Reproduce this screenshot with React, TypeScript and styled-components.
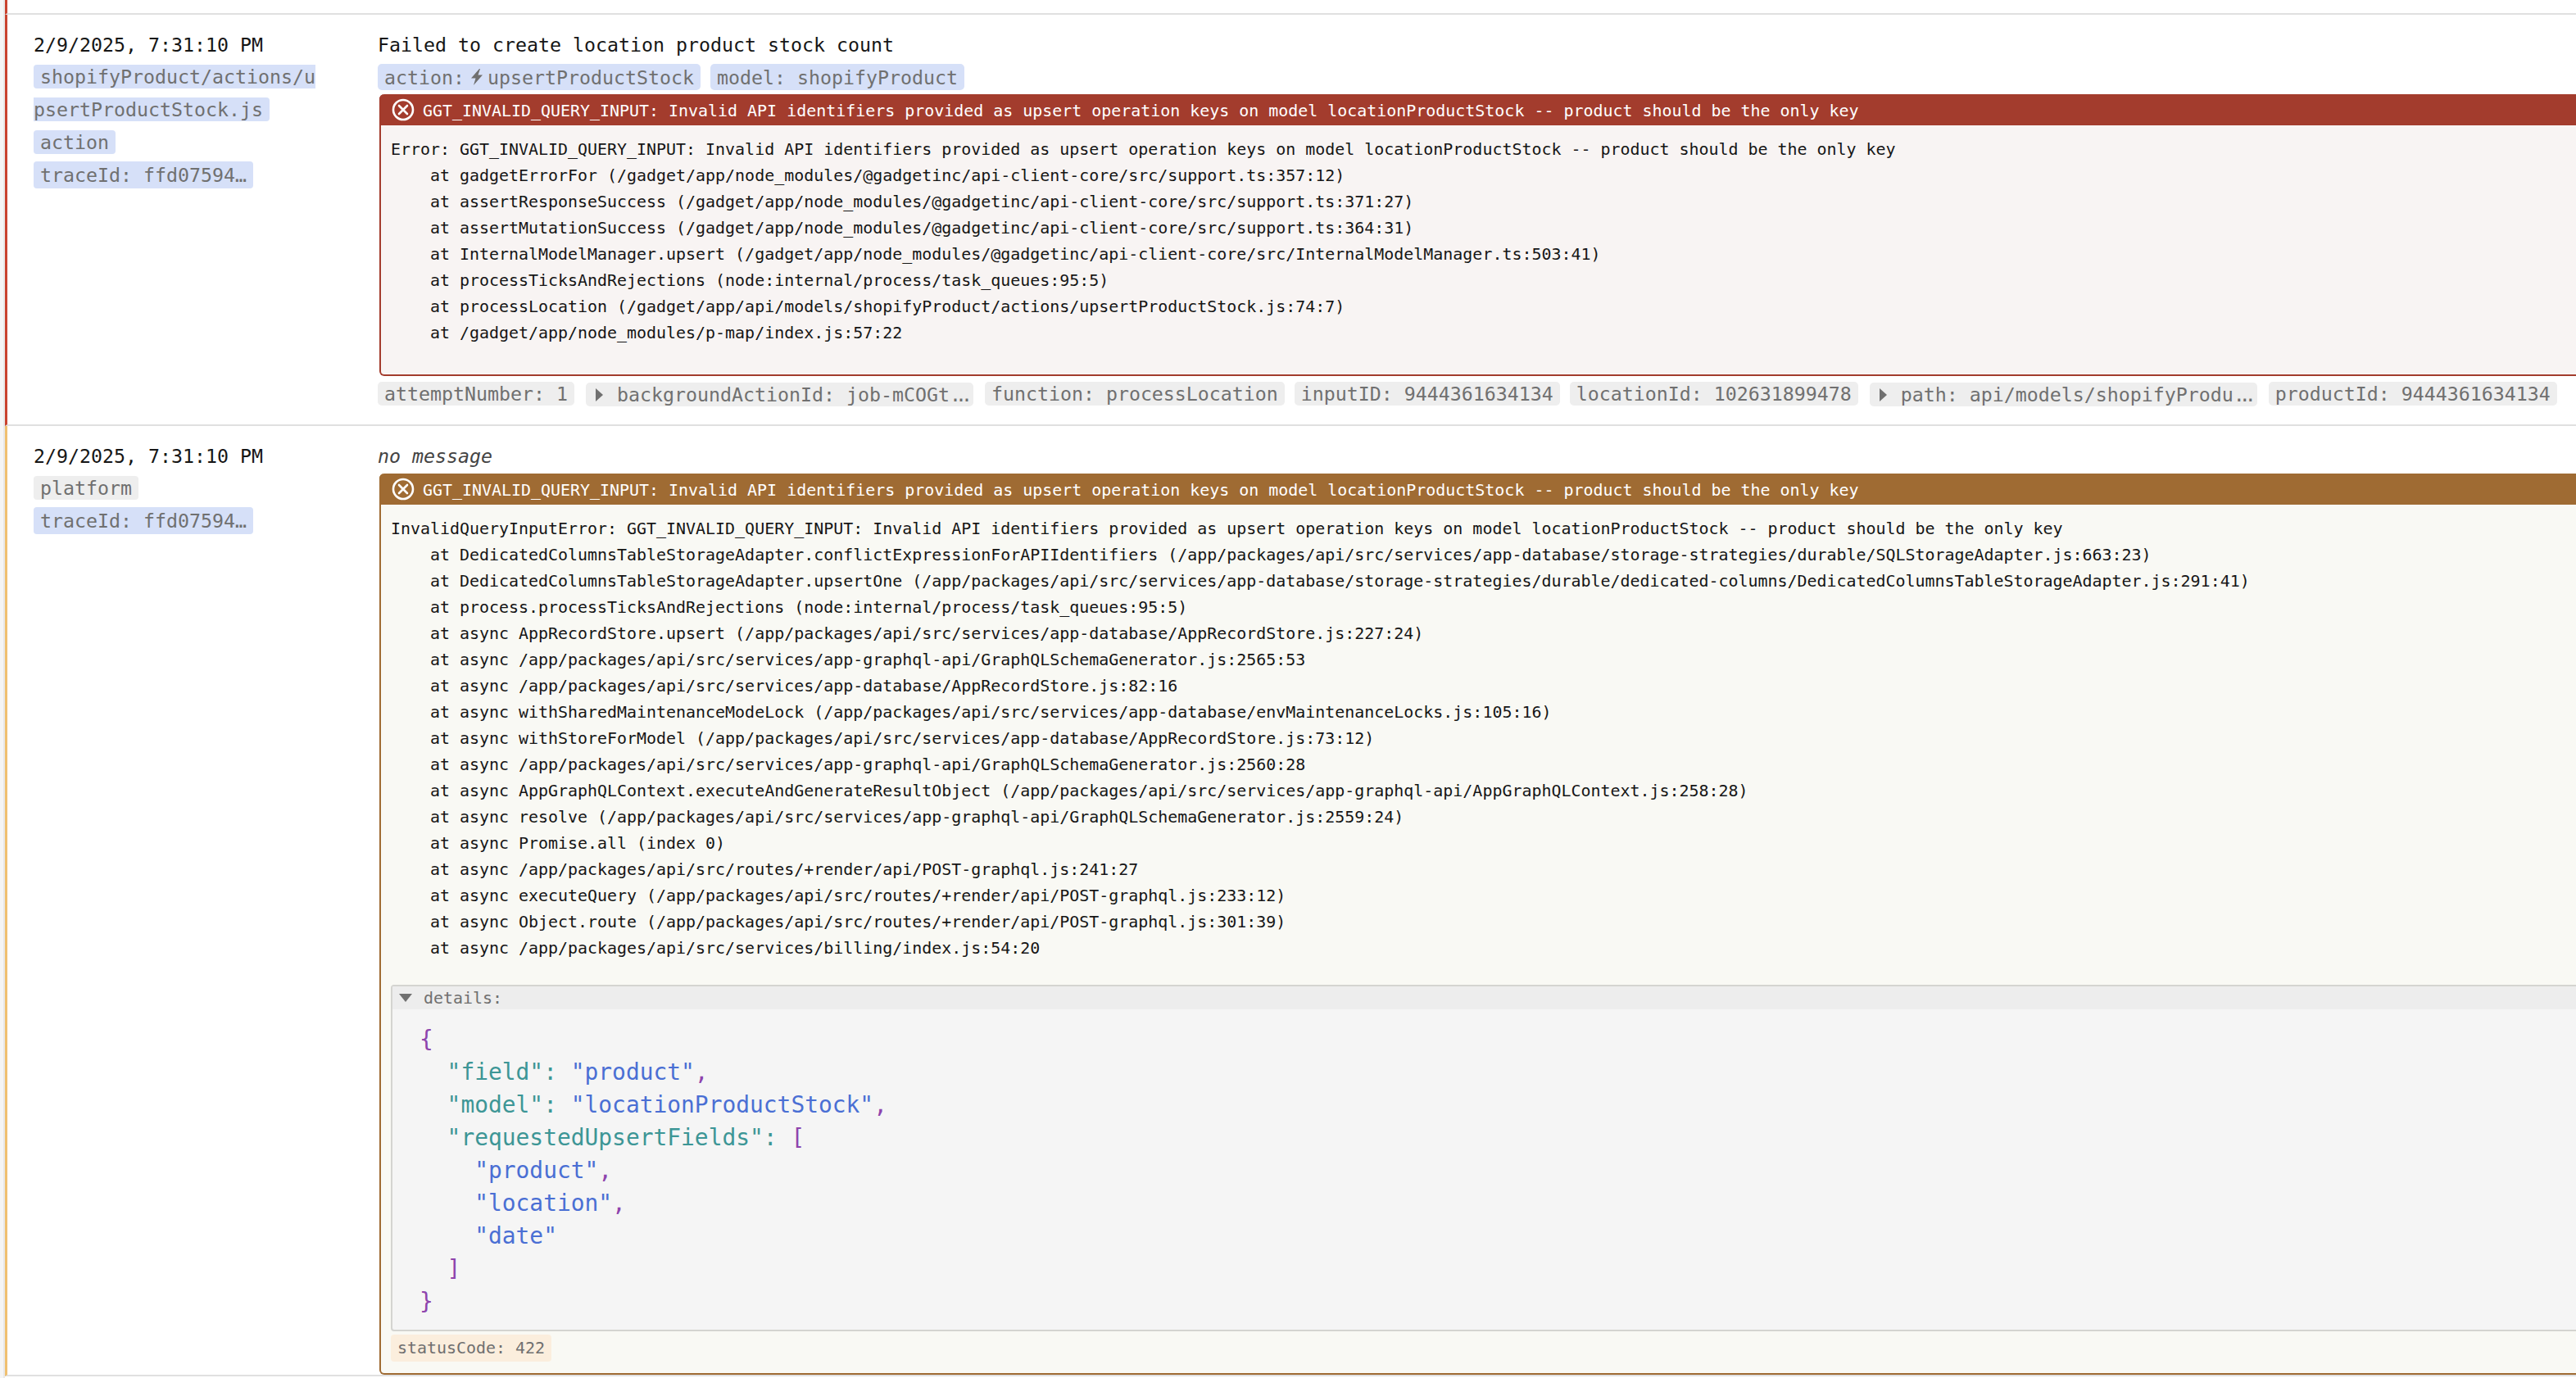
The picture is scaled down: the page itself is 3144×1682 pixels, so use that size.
import React from 'react';
import styled, { createGlobalStyle } from 'styled-components';

const colors = {
  error: '#c9432f',
  warn: '#f0c070',
  line: '#e0e0e0',
  chipText: '#707070',
};

const GlobalStyle = createGlobalStyle`
  html, body {
    margin: 0;
    padding: 0;
    height: 100%;
    overflow: hidden;
    background: #fff;
  }
`;

const Page = styled.div`
  display: flex;
  width: 3144px;
  height: 1682px;
  overflow: hidden;
  font-family: 'DejaVu Sans Mono', 'Liberation Mono', monospace;
  font-size: 23.25px;
  color: #161616;
`;

const Gutter = styled.div`
  flex: none;
  width: 4px;
  background: #f5f5f5;
  border-right: 2px solid #e9e9e9;
`;

const LogList = styled.div`
  flex: 1;
  min-width: 0;
`;

const PrevRow = styled.div<{ $level: string }>`
  height: 16px;
  border-left: 3px solid ${(p) => p.$level};
  border-bottom: 2px solid ${colors.line};
`;

const Row = styled.div<{ $level: string }>`
  display: flex;
  border-left: 3px solid ${(p) => p.$level};
  border-bottom: 2px solid ${colors.line};
`;

const Meta = styled.div`
  flex: none;
  width: 420px;
  margin-right: 32px;
  padding: 21px 0 0 32px;
  box-sizing: border-box;
`;

const Stamp = styled.div`
  line-height: 32px;
  white-space: nowrap;
`;

const MetaTags = styled.div`
  margin-top: 3px;
  width: 344px;
`;

const MetaLine = styled.div`
  line-height: 40px;
  word-break: break-all;
`;

const Tag = styled.span<{ $tone?: 'blue' | 'gray' }>`
  padding: 1px 8px;
  border-radius: 4px;
  color: ${colors.chipText};
  background: ${(p) => (p.$tone === 'blue' ? '#d6e0f8' : '#eeeeee')};
`;

const SplitTag = styled(Tag)`
  -webkit-box-decoration-break: slice;
  box-decoration-break: slice;
`;

const TraceTag = styled(Tag)`
  padding: 3px 8px;
`;

const Message = styled.div`
  flex: none;
  width: 2760px;
  padding-top: 21px;
`;

const Title = styled.div<{ $empty?: boolean }>`
  line-height: 32px;
  font-style: ${(p) => (p.$empty ? 'italic' : 'normal')};
  color: ${(p) => (p.$empty ? '#444' : 'inherit')};
`;

const ChipRow = styled.div`
  display: flex;
  gap: 12px;
  margin: 7px 0 1px;
`;

const Chip = styled.span<{ $tone?: 'blue' | 'gray' }>`
  display: inline-flex;
  align-items: center;
  height: 32px;
  padding: 0 8px;
  border-radius: 5px;
  white-space: pre;
  color: ${colors.chipText};
  background: ${(p) => (p.$tone === 'blue' ? '#d6e0f8' : '#eeeeee')};
`;

const BoltIcon = styled.svg`
  width: 14px;
  height: 20px;
  margin: 0 6px 0 8px;
  fill: #707070;
`;

const Panel = styled.div<{ $color: string; $bg: string }>`
  margin: 5px 0 0 2px;
  border: 2px solid ${(p) => p.$color};
  border-top: none;
  border-radius: 6px;
  background: ${(p) => p.$bg};
`;

const PanelHead = styled.div<{ $color: string }>`
  display: flex;
  align-items: center;
  height: 38px;
  margin: 0 -2px;
  padding: 1px 0 0 15px;
  box-sizing: border-box;
  gap: 10px;
  border-radius: 6px 6px 0 0;
  font-size: 19.95px;
  color: #fff;
  background: ${(p) => p.$color};
  white-space: pre;
`;

const CloseIcon = styled.svg`
  flex: none;
  width: 28px;
  height: 28px;
  margin-top: -1px;
`;

const PanelBody = styled.div`
  padding: 13px 12px 14px;
`;

const Trace = styled.pre`
  margin: 0;
  font: inherit;
  font-size: 19.95px;
  line-height: 32px;
  white-space: pre;
`;

const TraceEnd = styled.div`
  height: 21px;
`;

const Details = styled.div`
  margin-top: 8px;
  border: 2px solid #d4d4d0;
  border-radius: 4px;
  background: #f5f5f5;
`;

const DetailsHead = styled.div`
  display: flex;
  align-items: center;
  height: 28px;
  padding-left: 8px;
  font-size: 19.95px;
  color: ${colors.chipText};
  background: #ededed;
`;

const DownCaret = styled.span`
  width: 0;
  height: 0;
  margin-right: 14px;
  border-left: 8px solid transparent;
  border-right: 8px solid transparent;
  border-top: 10px solid #707070;
`;

const RightCaret = styled.span`
  width: 0;
  height: 0;
  margin: 0 17px 0 4px;
  border-top: 8px solid transparent;
  border-bottom: 8px solid transparent;
  border-left: 9px solid #707070;
`;

const Code = styled.pre`
  margin: 0;
  padding: 17px 33px 14px;
  font: inherit;
  font-size: 27.9px;
  line-height: 40px;
  white-space: pre;
`;

const JsonKey = styled.span`
  color: #3d9696;
`;

const JsonString = styled.span`
  color: #4a6fd4;
`;

const JsonPunct = styled.span`
  color: #8e44ad;
`;

const ExtraTag = styled.div`
  display: block;
  width: fit-content;
  margin-top: 4px;
  padding: 0 8px;
  font-size: 19.95px;
  line-height: 33px;
  border-radius: 4px;
  color: ${colors.chipText};
  background: #fbeedd;
`;

const FootRow = styled.div`
  display: flex;
  gap: 12px;
  margin: 7px 0 22px;
`;

const FootChip = styled.span<{ $fold?: boolean }>`
  display: inline-flex;
  align-items: center;
  height: 29px;
  padding: 0 8px;
  border-radius: 5px;
  white-space: pre;
  color: ${colors.chipText};
  background: #eeeeee;
  ${(p) => (p.$fold ? 'margin: 1px 2px 0 2px;' : '')}
`;

const Dots = styled.span`
  letter-spacing: -7px;
`;

const headline =
  'GGT_INVALID_QUERY_INPUT: Invalid API identifiers provided as upsert operation keys on model locationProductStock -- product should be the only key';

const actionTrace = `Error: ${headline}
    at gadgetErrorFor (/gadget/app/node_modules/@gadgetinc/api-client-core/src/support.ts:357:12)
    at assertResponseSuccess (/gadget/app/node_modules/@gadgetinc/api-client-core/src/support.ts:371:27)
    at assertMutationSuccess (/gadget/app/node_modules/@gadgetinc/api-client-core/src/support.ts:364:31)
    at InternalModelManager.upsert (/gadget/app/node_modules/@gadgetinc/api-client-core/src/InternalModelManager.ts:503:41)
    at processTicksAndRejections (node:internal/process/task_queues:95:5)
    at processLocation (/gadget/app/api/models/shopifyProduct/actions/upsertProductStock.js:74:7)
    at /gadget/app/node_modules/p-map/index.js:57:22`;

const platformTrace = `InvalidQueryInputError: ${headline}
    at DedicatedColumnsTableStorageAdapter.conflictExpressionForAPIIdentifiers (/app/packages/api/src/services/app-database/storage-strategies/durable/SQLStorageAdapter.js:663:23)
    at DedicatedColumnsTableStorageAdapter.upsertOne (/app/packages/api/src/services/app-database/storage-strategies/durable/dedicated-columns/DedicatedColumnsTableStorageAdapter.js:291:41)
    at process.processTicksAndRejections (node:internal/process/task_queues:95:5)
    at async AppRecordStore.upsert (/app/packages/api/src/services/app-database/AppRecordStore.js:227:24)
    at async /app/packages/api/src/services/app-graphql-api/GraphQLSchemaGenerator.js:2565:53
    at async /app/packages/api/src/services/app-database/AppRecordStore.js:82:16
    at async withSharedMaintenanceModeLock (/app/packages/api/src/services/app-database/envMaintenanceLocks.js:105:16)
    at async withStoreForModel (/app/packages/api/src/services/app-database/AppRecordStore.js:73:12)
    at async /app/packages/api/src/services/app-graphql-api/GraphQLSchemaGenerator.js:2560:28
    at async AppGraphQLContext.executeAndGenerateResultObject (/app/packages/api/src/services/app-graphql-api/AppGraphQLContext.js:258:28)
    at async resolve (/app/packages/api/src/services/app-graphql-api/GraphQLSchemaGenerator.js:2559:24)
    at async Promise.all (index 0)
    at async /app/packages/api/src/routes/+render/api/POST-graphql.js:241:27
    at async executeQuery (/app/packages/api/src/routes/+render/api/POST-graphql.js:233:12)
    at async Object.route (/app/packages/api/src/routes/+render/api/POST-graphql.js:301:39)
    at async /app/packages/api/src/services/billing/index.js:54:20`;

function ErrorHead({ color }: { color: string }) {
  return (
    <PanelHead $color={color}>
      <CloseIcon viewBox="0 0 28 28" fill="none" stroke="#fff" strokeWidth="2.6" strokeLinecap="round">
        <circle cx="14" cy="14" r="12" />
        <path d="M9 9l10 10M19 9L9 19" />
      </CloseIcon>
      {headline}
    </PanelHead>
  );
}

function App() {
  return (
    <Page>
      <GlobalStyle />
      <Gutter />
      <LogList>
        <PrevRow $level={colors.error} />

        <Row $level={colors.error}>
          <Meta>
            <Stamp>2/9/2025, 7:31:10 PM</Stamp>
            <MetaTags>
              <MetaLine>
                <SplitTag $tone="blue">shopifyProduct/actions/upsertProductStock.js</SplitTag>
              </MetaLine>
              <MetaLine>
                <Tag $tone="blue">action</Tag>
              </MetaLine>
              <MetaLine>
                <TraceTag $tone="blue">traceId: ffd07594…</TraceTag>
              </MetaLine>
            </MetaTags>
          </Meta>
          <Message>
            <Title>Failed to create location product stock count</Title>
            <ChipRow>
              <Chip $tone="blue">
                action:
                <BoltIcon viewBox="0 0 14 20">
                  <path d="M10 0L0 11.5h5.5L3 20l11-12.5H8.5L11 0z" />
                </BoltIcon>
                upsertProductStock
              </Chip>
              <Chip $tone="blue">model: shopifyProduct</Chip>
            </ChipRow>
            <Panel $color="#a33c2d" $bg="#f8f4f3">
              <ErrorHead color="#a33c2d" />
              <PanelBody>
                <Trace>{actionTrace}</Trace>
                <TraceEnd />
              </PanelBody>
            </Panel>
            <FootRow>
              <FootChip>attemptNumber: 1</FootChip>
              <FootChip $fold>
                <RightCaret />
                backgroundActionId: job-mCOGt<Dots>...</Dots>
              </FootChip>
              <FootChip>function: processLocation</FootChip>
              <FootChip>inputID: 9444361634134</FootChip>
              <FootChip>locationId: 102631899478</FootChip>
              <FootChip $fold>
                <RightCaret />
                path: api/models/shopifyProdu<Dots>...</Dots>
              </FootChip>
              <FootChip>productId: 9444361634134</FootChip>
            </FootRow>
          </Message>
        </Row>

        <Row $level={colors.warn}>
          <Meta>
            <Stamp>2/9/2025, 7:31:10 PM</Stamp>
            <MetaTags>
              <MetaLine>
                <Tag $tone="gray">platform</Tag>
              </MetaLine>
              <MetaLine>
                <TraceTag $tone="blue">traceId: ffd07594…</TraceTag>
              </MetaLine>
            </MetaTags>
          </Meta>
          <Message>
            <Title $empty>no message</Title>
            <Panel $color="#9f6b33" $bg="#f9f9f4">
              <ErrorHead color="#9f6b33" />
              <PanelBody>
                <Trace>{platformTrace}</Trace>
                <TraceEnd />
                <Details>
                  <DetailsHead>
                    <DownCaret />
                    details:
                  </DetailsHead>
                  <Code>
                    <JsonPunct>{'{'}</JsonPunct>
                    {'\n  '}
                    <JsonKey>"field":</JsonKey> <JsonString>"product"</JsonString>
                    <JsonPunct>,</JsonPunct>
                    {'\n  '}
                    <JsonKey>"model":</JsonKey> <JsonString>"locationProductStock"</JsonString>
                    <JsonPunct>,</JsonPunct>
                    {'\n  '}
                    <JsonKey>"requestedUpsertFields":</JsonKey> <JsonPunct>[</JsonPunct>
                    {'\n    '}
                    <JsonString>"product"</JsonString>
                    <JsonPunct>,</JsonPunct>
                    {'\n    '}
                    <JsonString>"location"</JsonString>
                    <JsonPunct>,</JsonPunct>
                    {'\n    '}
                    <JsonString>"date"</JsonString>
                    {'\n  '}
                    <JsonPunct>]</JsonPunct>
                    {'\n'}
                    <JsonPunct>{'}'}</JsonPunct>
                  </Code>
                </Details>
                <ExtraTag>statusCode: 422</ExtraTag>
              </PanelBody>
            </Panel>
          </Message>
        </Row>
      </LogList>
    </Page>
  );
}

export default App;
